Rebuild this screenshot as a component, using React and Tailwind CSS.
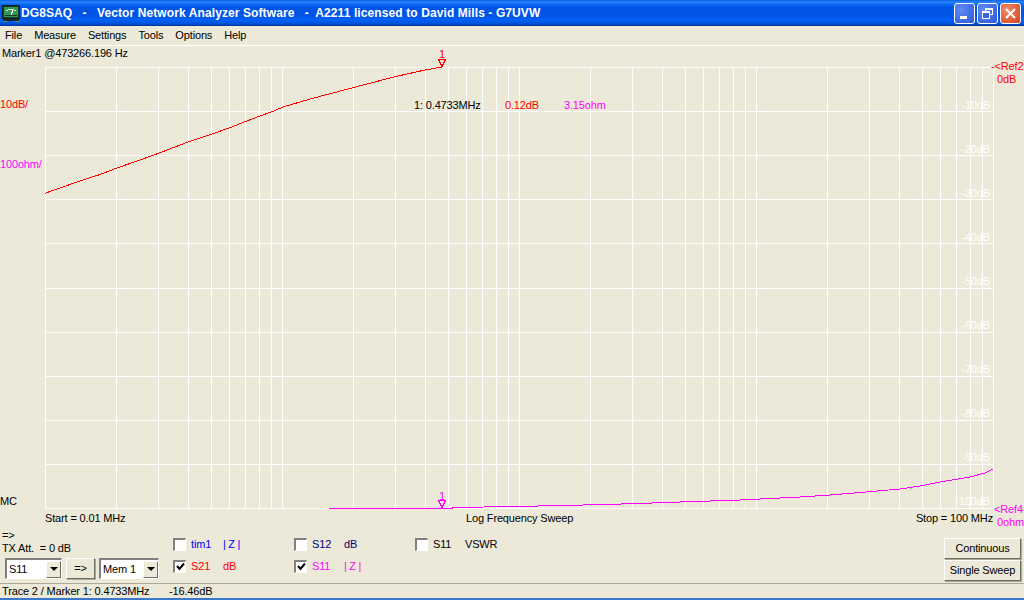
import React from "react";

const W = 1024;
const H = 484; // plot area, y 46..530 on the page
const X0 = 45;
const X1 = 993;
const Y0 = 21;
const DECADE = (X1 - X0) / 4;
const ROW = 44.1;

const vLines = [];
for (let d = 0; d < 4; d++) {
  for (let n = 1; n < 10; n++) {
    vLines.push(Math.round(X0 + DECADE * (d + Math.log10(n))));
  }
}
vLines.push(X1);

const hLines = Array.from({ length: 11 }, (_, i) => Math.round(Y0 + i * ROW));

const red = [
  [45, 148], [47, 146.5], [60, 142], [80, 135], [100, 128.5], [117, 122], [140, 114], [158, 107.5],
  [188, 96], [212, 88], [230, 81.7], [245, 75.7], [260, 70], [272, 65.7], [283, 61], [310, 53],
  [353, 41.7], [395, 30.7], [425, 24], [442, 21],
];
const magenta = [
  [329, 462.5], [452, 462.5], [453, 461.5], [515, 460.5], [562, 459.5], [605, 458.5], [638, 457.5], [680, 456],
  [740, 454], [800, 451], [830, 449], [860, 446.5], [900, 443], [920, 440], [940, 436], [970, 431], [985, 427], [993, 423],
];
const toPts = (pts) => pts.map((p) => p.join(",")).join(" ");

const dbLabels = ["-10dB", "-20dB", "-30dB", "-40dB", "-50dB", "-60dB", "-70dB", "-80dB", "-90dB", "-100dB"];

function Plot() {
  return (
    <div className="relative h-[484px] w-full">
      <svg width={W} height={H} className="block">
        <g stroke="#ffffff" strokeWidth="1" shapeRendering="crispEdges">
          {vLines.map((x, i) => (
            <line key={i} x1={x + 0.5} x2={x + 0.5} y1={Y0} y2={hLines[10]} />
          ))}
          {hLines.map((y, i) => (
            <line key={i} x1={X0} x2={X1 + 1} y1={y + 0.5} y2={y + 0.5} />
          ))}
        </g>
        <polyline points={toPts(red)} fill="none" stroke="#ff0000" strokeWidth="1" shapeRendering="crispEdges" />
        <polyline points={toPts(magenta)} fill="none" stroke="#ff00ff" strokeWidth="1" shapeRendering="crispEdges" />
        <polygon points="438.5,13.5 445.5,13.5 442,20.5" fill="none" stroke="#ff0000" shapeRendering="crispEdges" />
        <polygon points="438.5,454.5 445.5,454.5 442,461.5" fill="none" stroke="#ff00ff" shapeRendering="crispEdges" />
      </svg>

      <span className="absolute left-[2px] top-0 leading-[14px] text-black">Marker1 @473266.196 Hz</span>
      <span className="absolute left-[439px] top-[1px] leading-[14px] text-[#ff0000]">1</span>
      <span className="absolute left-[439px] top-[443px] leading-[14px] text-[#ff00ff]">1</span>

      <span className="absolute left-0 top-[51px] leading-[14px] text-[#ff0000]">10dB/</span>
      <span className="absolute left-0 top-[111px] leading-[14px] text-[#ff00ff]">100ohm/</span>
      <span className="absolute left-0 top-[448px] leading-[14px] text-black">MC</span>

      <span className="absolute left-[414px] top-[52px] leading-[14px] text-black">1: 0.4733MHz</span>
      <span className="absolute left-[505px] top-[52px] leading-[14px] text-[#ff0000]">0.12dB</span>
      <span className="absolute left-[564px] top-[52px] leading-[14px] text-[#ff00ff]">3.15ohm</span>

      <span className="absolute left-[991px] top-[13px] leading-[14px] text-[#ff0000]">-&lt;Ref2</span>
      <span className="absolute left-[997px] top-[26px] leading-[14px] text-[#ff0000]">0dB</span>
      <span className="absolute left-[994px] top-[456px] leading-[14px] text-[#ff00ff]">&lt;Ref4</span>
      <span className="absolute left-[997px] top-[469px] leading-[14px] text-[#ff00ff]">0ohm</span>

      {dbLabels.map((t, i) => (
        <span
          key={t}
          className="absolute right-[34px] leading-[14px] text-white"
          style={{ top: 52 + i * 44 }}
        >
          {t}
        </span>
      ))}

      <span className="absolute left-[45px] top-[465px] leading-[14px] text-black">Start = 0.01 MHz</span>
      <span className="absolute left-[466px] top-[465px] leading-[14px] text-black">Log Frequency Sweep</span>
      <span className="absolute right-[31px] top-[465px] leading-[14px] text-black">Stop = 100 MHz</span>
    </div>
  );
}

function AppIcon() {
  return (
    <svg width="18" height="19" viewBox="0 0 18 19" className="shrink-0" shapeRendering="crispEdges">
      <rect x="0.5" y="1.5" width="17" height="13" fill="#1c3a34" stroke="#0c1c20" />
      <rect x="2" y="3" width="14" height="10" fill="#2f9a58" />
      <path d="M4 7 Q9 3 14 7" fill="none" stroke="#d8f0c0" strokeWidth="1" />
      <path d="M9 11 L11 6" fill="none" stroke="#ffffff" strokeWidth="1" />
      <rect x="3" y="11" width="12" height="1" fill="#12352a" />
      <rect x="1" y="15" width="16" height="2" fill="#22282c" />
      <rect x="1" y="17" width="4" height="1" fill="#3ea860" />
      <rect x="13" y="17" width="4" height="1" fill="#3ea860" />
    </svg>
  );
}

function WinButton({ className, children }) {
  return (
    <div className={"flex h-[21px] w-[21px] items-center justify-center rounded-[3px] border border-white " + className}>
      {children}
    </div>
  );
}

function TitleBar() {
  return (
    <div className="flex h-[26px] shrink-0 items-center bg-[linear-gradient(180deg,#0a5fe8_0%,#2a86f8_8%,#0a6af6_16%,#0055e3_30%,#0055e8_60%,#025ff4_78%,#0058e4_88%,#0047c4_94%,#0036a0_100%)] pl-[2px] pr-[3px]">
      <AppIcon />
      <span className="ml-[1px] whitespace-pre font-['Liberation_Sans'] text-[12px] font-bold leading-none tracking-[0.1px] text-white">
        DG8SAQ   -   Vector Network Analyzer Software   -  A2211 licensed to David Mills - G7UVW
      </span>
      <div className="ml-auto flex gap-[2px]">
        <WinButton className="bg-[radial-gradient(circle_at_30%_30%,#5f8cf0,#2d56d8)]">
          <span className="mt-[9px] mr-[3px] block h-[3px] w-[7px] bg-white" />
        </WinButton>
        <WinButton className="bg-[radial-gradient(circle_at_30%_30%,#5f8cf0,#2d56d8)]">
          <svg width="13" height="13" viewBox="0 0 13 13" fill="none" stroke="#fff" shapeRendering="crispEdges">
            <rect x="4.5" y="1.5" width="7" height="6" />
            <rect x="1.5" y="4.5" width="7" height="7" fill="#3c66e0" />
            <path d="M4 2h8M1 5h8" strokeWidth="1" />
          </svg>
        </WinButton>
        <WinButton className="bg-[radial-gradient(circle_at_30%_30%,#ee8a68,#d44420)]">
          <svg width="13" height="13" viewBox="0 0 13 13" fill="none" stroke="#fff" strokeWidth="2">
            <path d="M2 2 L11 11 M11 2 L2 11" />
          </svg>
        </WinButton>
      </div>
    </div>
  );
}

function MenuBar() {
  return (
    <div className="flex h-[20px] shrink-0 items-center gap-[12px] border-b border-white pl-[5px] pb-[1px]">
      {["File", "Measure", "Settings", "Tools", "Options", "Help"].map((m) => (
        <span key={m}>{m}</span>
      ))}
    </div>
  );
}

function Checkbox({ checked }) {
  return (
    <span className="flex h-[13px] w-[13px] shrink-0 items-center justify-center border-t-2 border-r border-b border-l-2 border-t-[#808080] border-r-white border-b-white border-l-[#808080] bg-white">
      {checked && (
        <svg width="9" height="9" viewBox="0 0 9 9" fill="none" stroke="#000" strokeWidth="2">
          <path d="M1 4 L3.5 7 L8 1.5" />
        </svg>
      )}
    </span>
  );
}

function Channel({ checked, name, unit, color, unitClass }) {
  return (
    <div className={"flex h-[22px] items-center " + color}>
      <Checkbox checked={checked} />
      <span className="ml-[5px] w-[32px]">{name}</span>
      <span className={unitClass}>{unit}</span>
    </div>
  );
}

function Combo({ label, className }) {
  return (
    <div className={"flex h-[21px] items-center justify-between border-t-2 border-r border-b border-l-2 border-t-[#808080] border-r-white border-b-white border-l-[#808080] bg-white pl-[2px] " + className}>
      <span>{label}</span>
      <span className="flex h-[17px] w-[15px] items-center justify-center border border-t-white border-r-[#716f64] border-b-[#716f64] border-l-white bg-[#ece9d8]">
        <span className="h-0 w-0 border-x-[4px] border-t-[4px] border-x-transparent border-t-black" />
      </span>
    </div>
  );
}

function RaisedButton({ children, className }) {
  return (
    <div className={"flex items-center justify-center border border-t-white border-r-[#716f64] border-b-[#716f64] border-l-white shadow-[1px_1px_0_#aca899] " + className}>
      {children}
    </div>
  );
}

function Controls() {
  return (
    <div className="flex h-[53px] shrink-0">
      <div className="ml-[2px] w-[171px] shrink-0 leading-[13px]">
        <div className="-mt-[1px]">=&gt;</div>
        <div className="whitespace-pre">TX Att.  = 0 dB</div>
        <div className="mt-[3px] ml-[3px] flex gap-[4px]">
          <Combo label="S11" className="w-[57px]" />
          <RaisedButton className="h-[21px] w-[29px]">=&gt;</RaisedButton>
          <Combo label="Mem 1" className="w-[60px]" />
        </div>
      </div>
      <div className="mt-[3px] grid h-[44px] w-[363px] shrink-0 grid-cols-3 grid-rows-[22px_22px]">
        <Channel name="tim1" unit="|Z|" color="text-[#0000ff]" unitClass="tracking-[2.5px]" />
        <Channel name="S12" unit="dB" color="text-[#000080]" />
        <Channel name="S11" unit="VSWR" color="text-black" />
        <Channel checked name="S21" unit="dB" color="text-[#ff0000]" />
        <Channel checked name="S11" unit="|Z|" color="text-[#ff00ff]" unitClass="tracking-[2.5px]" />
      </div>
      <div className="ml-auto mr-[3px] mt-[8px] flex w-[77px] flex-col gap-[1px]">
        <RaisedButton className="h-[21px] w-full">Continuous</RaisedButton>
        <RaisedButton className="h-[21px] w-full">Single Sweep</RaisedButton>
      </div>
    </div>
  );
}

function StatusBar() {
  return (
    <div className="flex h-[15px] shrink-0 items-center whitespace-pre border-t border-[#aca899] pl-[2px]">
      <span className="w-[167px]">Trace 2 / Marker 1: 0.4733MHz</span>
      <span>-16.46dB</span>
    </div>
  );
}

export default function App() {
  return (
    <div className="flex h-[600px] w-[1024px] flex-col overflow-hidden bg-[#ece9d8] font-['Liberation_Sans',sans-serif] text-[11px] tracking-[-0.15px] text-black">
      <TitleBar />
      <MenuBar />
      <Plot />
      <Controls />
      <StatusBar />
      <div className="mt-auto h-[2px] shrink-0 bg-[#3a78cc]" />
    </div>
  );
}
